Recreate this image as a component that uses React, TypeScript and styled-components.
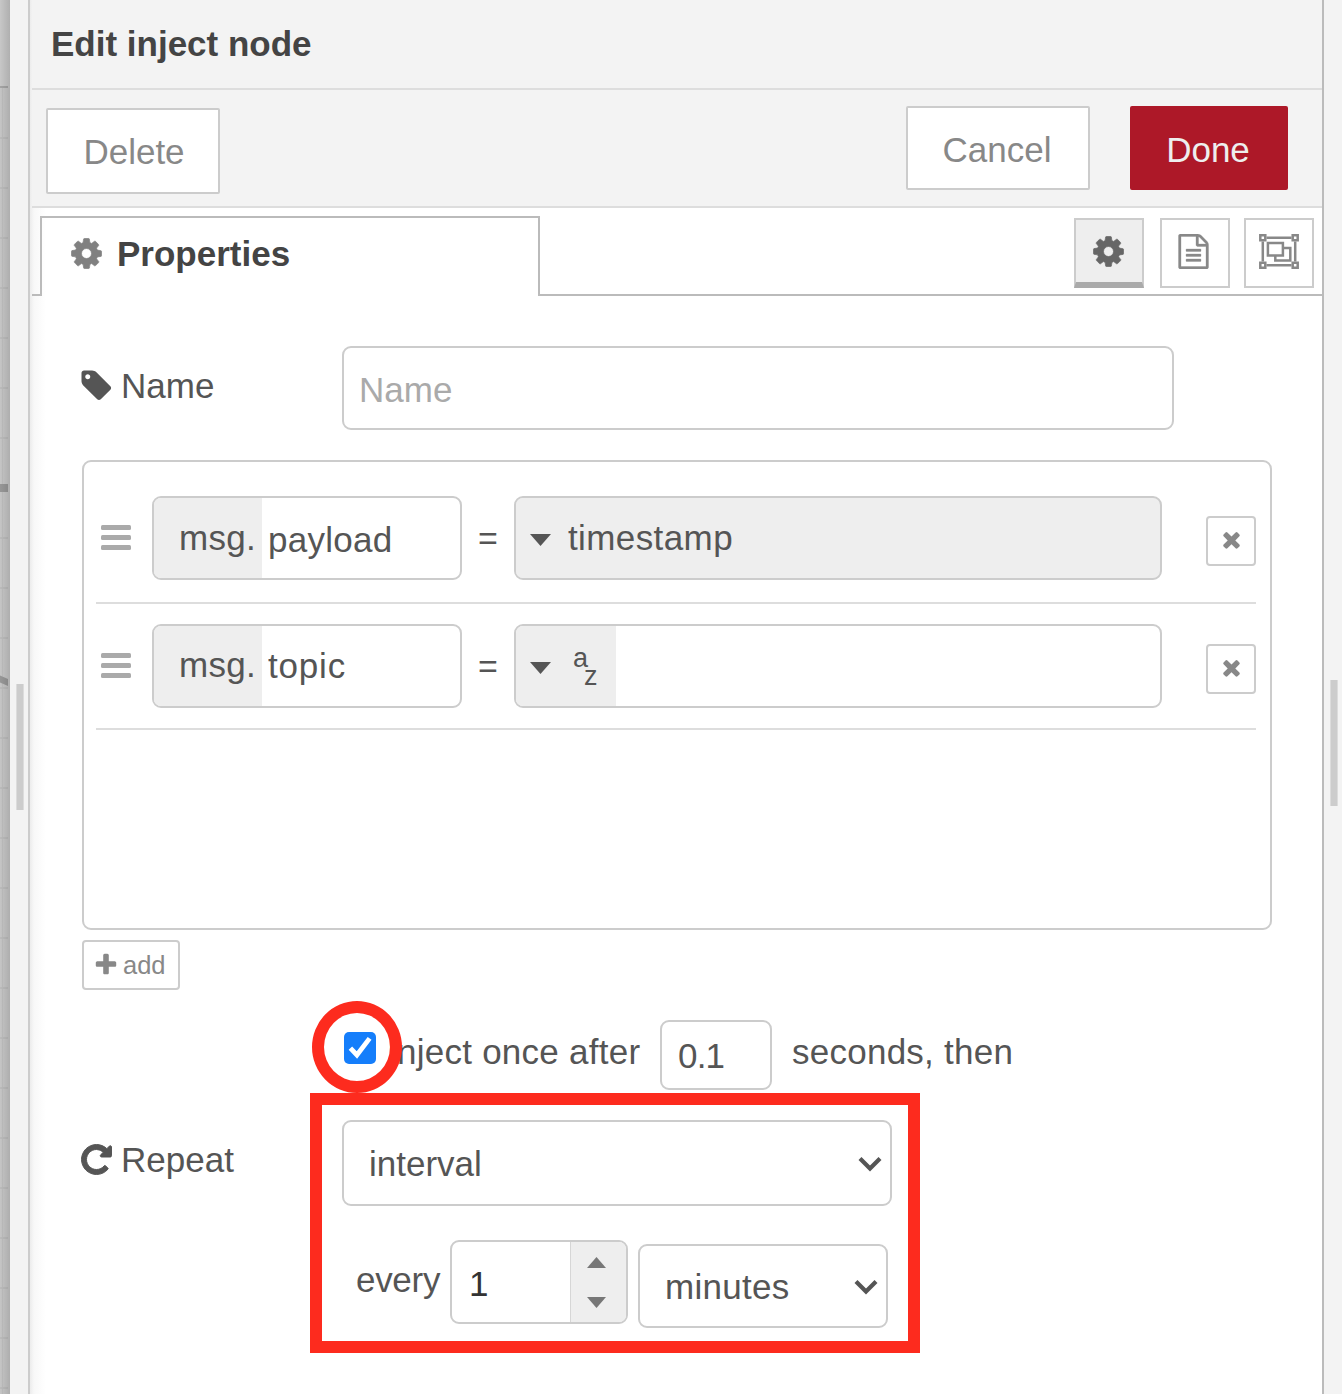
import React from "react";
import styled, { createGlobalStyle } from "styled-components";

const Global = createGlobalStyle`
  * { box-sizing: border-box; }
  body { margin: 0; background: #fff; }
  input, button { font: inherit; color: inherit; margin: 0; outline: none; }
`;

/* ---------- shell ---------- */
const Shell = styled.div`
  position: relative;
  display: flex;
  width: 1342px;
  height: 1394px;
  overflow: hidden;
  background: #fff;
  color: #555;
  font-family: "Liberation Sans", Arial, sans-serif;
  font-size: 35px;
  line-height: 40px;
`;

const Canvas = styled.svg`
  flex: none;
  display: block;
`;

const Separator = styled.div<{ $width: number; $top: number; $left: number }>`
  flex: none;
  width: ${(p) => p.$width}px;
  padding: ${(p) => p.$top}px 0 0 ${(p) => p.$left}px;
  background: #f3f3f3;
`;

const Grip = styled.div`
  width: 8px;
  height: 126px;
  background: #ccc;
  border: solid #dcdcdc;
  border-width: 0 1px;
`;

const Tray = styled.section`
  flex: none;
  width: 1296px;
  padding-left: 2px;
  border-left: 2px solid #ccc;
  border-right: 2px solid #bbb;
  background: linear-gradient(to right, #ececec, #f8f8f8 4px, #fff 16px);
`;

const Header = styled.header`
  height: 90px;
  padding: 24px 0 0 19px;
  border-bottom: 2px solid #ddd;
  background: #f3f3f3;
  color: #444;
  font-weight: bold;
`;

const Toolbar = styled.div`
  display: flex;
  align-items: flex-start;
  height: 118px;
  padding: 16px 34px 0 14px;
  border-bottom: 2px solid #ddd;
  background: #f3f3f3;
`;

const ToolButton = styled.button<{ $width: number; $height?: number; $primary?: boolean }>`
  width: ${(p) => p.$width}px;
  height: ${(p) => p.$height ?? 84}px;
  padding: ${(p) => (p.$height ? "2px 0 0 2px" : "4px 2px 0 0")};
  border: 2px solid ${(p) => (p.$primary ? "#ad1828" : "#ccc")};
  border-radius: 2px;
  background: ${(p) => (p.$primary ? "#ad1828" : "#fff")};
  color: ${(p) => (p.$primary ? "#eee" : "#888")};
`;

const LeftTools = styled.div`
  flex: 1;
  padding-top: 2px;
`;

const RightTools = styled.div`
  display: flex;
  gap: 40px;
`;

/* ---------- tabs ---------- */
const TabStrip = styled.div`
  display: flex;
  height: 88px;
  padding-top: 8px;
`;

const TabEdge = styled.div`
  width: 8px;
  border-bottom: 2px solid #bbb;
`;

const Tab = styled.div`
  display: flex;
  width: 500px;
  padding: 16px 0 0 30px;
  gap: 13px;
  border: 2px solid #bbb;
  border-bottom: 0;
  color: #444;
  font-weight: bold;
`;

const TabIcon = styled.span`
  display: flex;
  padding-top: 2px;
  margin-left: -3px;
  color: #808080;
`;

const TabActions = styled.div`
  flex: 1;
  display: flex;
  justify-content: flex-end;
  padding: 2px 8px 0 0;
  border-bottom: 2px solid #bbb;
`;

const TabAction = styled.button<{ $active?: boolean; $gap?: number }>`
  display: flex;
  align-items: center;
  justify-content: center;
  width: 70px;
  height: 70px;
  margin-left: ${(p) => p.$gap ?? 0}px;
  padding: ${(p) => (p.$active ? "0 1px 0 0" : "0 0 3px")};
  border: 2px solid #ccc;
  ${(p) => p.$active && "border-bottom: 6px solid #aaa;"}
  background: ${(p) => (p.$active ? "#eee" : "#fff")};
  color: ${(p) => (p.$active ? "#666" : "#888")};
`;

/* ---------- form ---------- */
const Form = styled.div`
  padding: 50px 50px 0;
`;

const FormRow = styled.div<{ $after?: number }>`
  display: flex;
  align-items: flex-start;
  margin-bottom: ${(p) => p.$after ?? 0}px;
`;

const Label = styled.label`
  display: flex;
  gap: 7px;
  width: 260px;
  padding-top: 20px;
`;

const LabelIcon = styled.span`
  display: flex;
  margin: 2px 0 0 -3px;
`;

const Field = styled.div<{ $width: number; $height?: number; $filled?: boolean }>`
  display: flex;
  flex: none;
  width: ${(p) => p.$width}px;
  height: ${(p) => p.$height ?? 84}px;
  border: 2px solid #ccc;
  border-radius: 9px;
  overflow: hidden;
  background: ${(p) => (p.$filled ? "#eee" : "#fff")};
`;

const TextInput = styled.input<{ $left: number; $top?: number; $spacing?: number; $dark?: boolean }>`
  flex: 1;
  min-width: 0;
  padding: ${(p) => p.$top ?? 4}px 0 0 ${(p) => p.$left}px;
  border: 0;
  background: transparent;
  color: ${(p) => (p.$dark ? "#333" : "#555")};
  letter-spacing: ${(p) => p.$spacing ?? 0}px;
  &::placeholder { color: #aaa; opacity: 1; }
`;

const List = styled.div`
  width: 1190px;
  height: 470px;
  padding: 12px 14px 0 12px;
  border: 2px solid #ccc;
  border-radius: 9px;
`;

const Item = styled.div<{ $top: number; $height: number }>`
  display: flex;
  align-items: flex-start;
  height: ${(p) => p.$height}px;
  padding: ${(p) => p.$top}px 0 0 5px;
  border-bottom: 2px solid #ddd;
`;

const DragHandle = styled.div`
  display: flex;
  flex-direction: column;
  gap: 5px;
  width: 30px;
  margin: 29px 21px 0 0;
`;

const Bar = styled.i`
  height: 5px;
  border-radius: 1.5px;
  background: #aaa;
`;

const Prefix = styled.span<{ $top?: number }>`
  width: 108px;
  padding: ${(p) => p.$top ?? 20}px 0 0 25px;
  background: #eee;
  letter-spacing: 0.3px;
`;

const Equals = styled.span`
  width: 52px;
  padding-top: 22px;
  text-align: center;
  font-size: 34px;
`;

const TypePicker = styled.span<{ $width: number }>`
  display: flex;
  width: ${(p) => p.$width}px;
  padding: 20px 0 0 14px;
  background: #eee;
  letter-spacing: 0.4px;
`;

const Caret = styled.i`
  flex: none;
  width: 21px;
  height: 12px;
  margin: 16px 17px 0 0;
  background: #555;
  clip-path: polygon(0 0, 100% 0, 50% 100%);
`;

const StringType = styled.span`
  display: flex;
  margin-top: -4px;
  padding-left: 5px;
  font-size: 27px;
  line-height: 32px;
  letter-spacing: 0;
`;

const Zed = styled.span`
  padding-top: 18px;
  margin-left: -4px;
`;

const RemoveButton = styled.button`
  display: flex;
  align-items: center;
  justify-content: center;
  width: 50px;
  height: 50px;
  margin: 20px 0 0 44px;
  padding: 0 0 4px;
  border: 2px solid #ccc;
  border-radius: 4px;
  background: #fff;
  color: #888;
`;

const AddButton = styled.button`
  display: flex;
  align-items: center;
  gap: 4px;
  width: 98px;
  height: 50px;
  margin-top: 10px;
  padding: 0 0 1px 9px;
  border: 2px solid #ccc;
  border-radius: 4px;
  background: #fff;
  color: #888;
  font-size: 25.5px;
`;

const AddIcon = styled.span`
  display: flex;
`;

const OnceRow = styled.div`
  display: flex;
  margin-top: 30px;
  padding-left: 262px;
`;

const CheckBox = styled.span`
  display: flex;
  flex: none;
  width: 32px;
  height: 32px;
  margin-top: 12px;
  border-radius: 5px;
  background: #157efb;
`;

const Text = styled.span<{ $top: number; $left?: number; $width?: number; $spacing?: number }>`
  flex: none;
  width: ${(p) => (p.$width ? `${p.$width}px` : "auto")};
  padding: ${(p) => p.$top}px 0 0 ${(p) => p.$left ?? 0}px;
  letter-spacing: ${(p) => p.$spacing ?? 0}px;
  white-space: pre;
`;

const RepeatRow = styled.div`
  display: flex;
  align-items: flex-start;
  margin-top: 30px;
`;

const Select = styled.button<{ $width: number; $height: number; $top: number; $spacing?: number }>`
  display: flex;
  align-items: center;
  justify-content: space-between;
  width: ${(p) => p.$width}px;
  height: ${(p) => p.$height}px;
  padding: ${(p) => p.$top}px 8px 0 25px;
  border: 2px solid #ccc;
  border-radius: 9px;
  background: #fff;
  color: #555;
  letter-spacing: ${(p) => p.$spacing ?? 0}px;
`;

const EveryRow = styled.div`
  display: flex;
  align-items: flex-start;
  padding: 34px 0 0 274px;
`;

const Steppers = styled.span`
  display: flex;
  flex-direction: column;
  align-items: center;
  gap: 29px;
  width: 56px;
  padding: 15px 4px 0 0;
  border-left: 1px solid #d6d6d6;
  background: #eee;
`;

const Step = styled.i<{ $down?: boolean }>`
  width: 19px;
  height: 11px;
  background: #777;
  clip-path: ${(p) => (p.$down ? "polygon(0 0, 100% 0, 50% 100%)" : "polygon(0 100%, 100% 100%, 50% 0)")};
`;

const MinutesSlot = styled.div`
  padding: 4px 0 0 10px;
`;

/* ---------- annotations ---------- */
const RingMark = styled.div`
  position: absolute;
  left: 312px;
  top: 1001px;
  width: 90px;
  height: 92px;
  border: 12px solid #fd2b1e;
  border-radius: 50%;
`;

const BoxMark = styled.div`
  position: absolute;
  left: 310px;
  top: 1093px;
  width: 610px;
  height: 260px;
  border: 12px solid #fd2b1e;
`;

/* ---------- icons ---------- */
const paths = {
  cog: "M1152 896q0-106-75-181t-181-75-181 75-75 181 75 181 181 75 181-75 75-181zm512-109v222q0 12-8 23t-20 13l-185 28q-19 54-39 91 35 50 107 138 10 12 10 25t-9 23q-27 37-99 108t-94 71q-12 0-26-9l-138-108q-44 23-91 38-16 136-29 186-7 28-36 28h-222q-14 0-24.5-8.5t-11.5-21.5l-28-184q-49-16-90-37l-141 107q-10 9-25 9-14 0-25-11-126-114-165-168-7-10-7-23 0-12 8-23 15-21 51-66.5t54-70.5q-27-50-41-99l-183-27q-13-2-21-12.5t-8-23.5v-222q0-12 8-23t19-13l186-28q14-46 39-92-40-57-107-138-10-12-10-24 0-10 9-23 26-36 98.5-107.5t94.5-71.5q13 0 26 10l138 107q44-23 91-38 16-136 29-186 7-28 36-28h222q14 0 24.5 8.5t11.5 21.5l28 184q49 16 90 37l142-107q9-9 24-9 13 0 25 10 129 119 165 170 7 8 7 22 0 12-8 23-15 21-51 66.5t-54 70.5q26 50 41 98l183 28q13 2 21 12.5t8 23.5z",
  tag: "M576 448q0-53-37.5-90.5t-90.5-37.5-90.5 37.5-37.5 90.5 37.5 90.5 90.5 37.5 90.5-37.5 37.5-90.5zm1067 576q0 53-37 90l-491 492q-39 37-91 37-53 0-90-37l-715-716q-38-37-64.5-101t-26.5-117v-416q0-52 38-90t90-38h416q53 0 117 26.5t102 64.5l715 714q37 39 37 91z",
  repeat: "M1664 256v448q0 26-19 45t-45 19h-448q-42 0-59-40-17-39 14-69l138-138q-148-137-349-137-104 0-198.5 40.5t-163.5 109.5-109.5 163.5-40.5 198.5 40.5 198.5 109.5 163.5 163.5 109.5 198.5 40.5q119 0 225-52t179-147q7-10 23-12 15 0 25 9l137 138q9 8 9.5 20.5t-7.5 22.5q-109 132-264 204.5t-327 72.5q-156 0-298-61t-245-164-164-245-61-298 61-298 164-245 245-164 298-61q147 0 284.5 55.5t244.5 156.5l130-129q29-31 70-14 39 17 39 59z",
  times: "M1490 1322q0 40-28 68l-136 136q-28 28-68 28t-68-28l-294-294-294 294q-28 28-68 28t-68-28l-136-136q-28-28-28-68t28-68l294-294-294-294q-28-28-28-68t28-68l136-136q28-28 68-28t68 28l294 294 294-294q28-28 68-28t68 28l136 136q28 28 28 68t-28 68l-294 294 294 294q28 28 28 68z",
  plus: "M1600 736v192q0 40-28 68t-68 28h-416v416q0 40-28 68t-68 28h-192q-40 0-68-28t-28-68v-416h-416q-40 0-68-28t-28-68v-192q0-40 28-68t68-28h416v-416q0-40 28-68t68-28h192q40 0 68 28t28 68v416h416q40 0 68 28t28 68z",
  file: "M1596 380q28 28 48 76t20 88v1152q0 40-28 68t-68 28h-1344q-40 0-68-28t-28-68v-1600q0-40 28-68t68-28h896q40 0 88 20t76 48zm-444-244v376h376q-10-29-22-41l-313-313q-12-12-41-22zm384 1528v-1024h-416q-40 0-68-28t-28-68v-416h-768v1536h1280zm-1024-864q0-14 9-23t23-9h704q14 0 23 9t9 23v64q0 14-9 23t-23 9h-704q-14 0-23-9t-9-23v-64zm736 224q14 0 23 9t9 23v64q0 14-9 23t-23 9h-704q-14 0-23-9t-9-23v-64q0-14 9-23t23-9h704zm0 256q14 0 23 9t9 23v64q0 14-9 23t-23 9h-704q-14 0-23-9t-9-23v-64q0-14 9-23t23-9h704z",
};

const Icon = ({ name, size = 35, weight = 0 }: { name: keyof typeof paths; size?: number; weight?: number }) => (
  <svg
    width={size}
    height={size}
    viewBox="0 0 1792 1792"
    fill="currentColor"
    stroke="currentColor"
    strokeWidth={weight}
  >
    <path d={paths[name]} />
  </svg>
);

const FileIcon = () => (
  <svg width="36" height="35" viewBox="51 0 1843 1792" fill="currentColor" stroke="currentColor" strokeWidth="16">
    <path d={paths.file} />
  </svg>
);

const ObjectGroup = () => (
  <svg width="40" height="35" viewBox="0 0 40 35" fill="none" stroke="currentColor" strokeWidth="2.5">
    <path d="M7.5 3.8h25M7.500 31.200h25M3.800 7.500v20M36.200 7.500v20" />
    <path d="M1.300 1.300h5v5h-5zM33.700 1.300h5v5h-5zM1.300 28.700h5v5h-5zM33.700 28.700h5v5h-5z" />
    <path d="M8.900 8.900h15v12.600h-15zM23.900 13.900h7.400v12.600h-15v-5" />
  </svg>
);

const Chevron = () => (
  <svg width="24" height="16" viewBox="0 0 24 16" fill="none" stroke="#555" strokeWidth="4.2">
    <path d="M2 2.5 12 12.5 22 2.5" />
  </svg>
);

const Tick = () => (
  <svg width="32" height="32" viewBox="0 0 32 32" fill="none" stroke="#fff" strokeWidth="4.8">
    <path d="M6.400 16.200 12.900 23 25.600 6.400" />
  </svg>
);

const gridLines = Array.from({ length: 26 }, (_, i) => 137 + i * 50);

const Workspace = () => (
  <Canvas width="10" height="1394" viewBox="0 0 10 1394">
    <defs>
      <linearGradient id="shade" x1="0" x2="1" y1="0" y2="0">
        <stop offset="0" stopColor="#000" stopOpacity="0" />
        <stop offset="1" stopColor="#000" stopOpacity="0.12" />
      </linearGradient>
    </defs>
    <rect width="10" height="1394" fill="#c7c7c7" />
    <rect y="88" width="10" height="1306" fill="#c5c5c5" />
    <rect y="88" x="2" width="1" height="1306" fill="#bdbdbd" />
    <rect y="86" width="8" height="2" fill="#a4a4a4" />
    {gridLines.map((y) => (
      <rect key={y} y={y} width="8" height="2" fill="#bbb" />
    ))}
    <rect y="484" width="8" height="8" fill="#979797" />
    <path d="M0 675.500 8 679V686L0 682.500z" fill="#979797" />
    <rect width="10" height="1394" fill="url(#shade)" />
  </Canvas>
);

const Handle = () => (
  <DragHandle>
    <Bar />
    <Bar />
    <Bar />
  </DragHandle>
);

export default function App() {
  return (
    <>
      <Global />
      <Shell>
        <Workspace />
        <Separator $width={18} $top={684} $left={6}>
          <Grip />
        </Separator>
        <Tray>
          <Header>Edit inject node</Header>
          <Toolbar>
            <LeftTools>
              <ToolButton $width={174} $height={86}>Delete</ToolButton>
            </LeftTools>
            <RightTools>
              <ToolButton $width={184}>Cancel</ToolButton>
              <ToolButton $width={158} $primary>Done</ToolButton>
            </RightTools>
          </Toolbar>
          <TabStrip>
            <TabEdge />
            <Tab>
              <TabIcon><Icon name="cog" weight={36} /></TabIcon>
              <span>Properties</span>
            </Tab>
            <TabActions>
              <TabAction $active><Icon name="cog" weight={36} /></TabAction>
              <TabAction $gap={16}><FileIcon /></TabAction>
              <TabAction $gap={14}><ObjectGroup /></TabAction>
            </TabActions>
          </TabStrip>

          <Form>
            <FormRow $after={30}>
              <Label>
                <LabelIcon><Icon name="tag" /></LabelIcon>
                Name
              </Label>
              <Field $width={832}>
                <TextInput $left={15} placeholder="Name" />
              </Field>
            </FormRow>

            <List>
              <Item $top={22} $height={130}>
                <Handle />
                <Field $width={310}>
                  <Prefix>msg.</Prefix>
                  <TextInput $left={6} $spacing={0.25} defaultValue="payload" />
                </Field>
                <Equals>=</Equals>
                <Field $width={648} $filled>
                  <TypePicker $width={600}>
                    <Caret />
                    timestamp
                  </TypePicker>
                </Field>
                <RemoveButton><Icon name="times" size={25} /></RemoveButton>
              </Item>
              <Item $top={20} $height={126}>
                <Handle />
                <Field $width={310}>
                  <Prefix $top={19}>msg.</Prefix>
                  <TextInput $left={6} $top={0} $spacing={0.8} defaultValue="topic" />
                </Field>
                <Equals>=</Equals>
                <Field $width={648}>
                  <TypePicker $width={100}>
                    <Caret />
                    <StringType>a<Zed>z</Zed></StringType>
                  </TypePicker>
                </Field>
                <RemoveButton><Icon name="times" size={25} /></RemoveButton>
              </Item>
            </List>
            <AddButton>
              <AddIcon><Icon name="plus" size={26} /></AddIcon>
              add
            </AddButton>

            <OnceRow>
              <CheckBox><Tick /></CheckBox>
              <Text $top={12} $left={11} $width={284} $spacing={0.25}>Inject once after</Text>
              <Field $width={112} $height={70}>
                <TextInput $left={16} $top={2} $spacing={-0.8} defaultValue="0.1" />
              </Field>
              <Text $top={12} $left={20} $spacing={0.25}>seconds, then</Text>
            </OnceRow>

            <RepeatRow>
              <Label>
                <LabelIcon><Icon name="repeat" weight={50} /></LabelIcon>
                Repeat
              </Label>
              <Select $width={550} $height={86} $top={2}>interval<Chevron /></Select>
            </RepeatRow>

            <EveryRow>
              <Text $top={20} $width={94} $spacing={-0.3}>every</Text>
              <Field $width={178}>
                <TextInput $left={17} $dark defaultValue="1" />
                <Steppers>
                  <Step />
                  <Step $down />
                </Steppers>
              </Field>
              <MinutesSlot>
                <Select $width={250} $height={84} $top={1} $spacing={0.3}>minutes<Chevron /></Select>
              </MinutesSlot>
            </EveryRow>
          </Form>
        </Tray>
        <Separator $width={18} $top={680} $left={6}>
          <Grip />
        </Separator>
        <RingMark />
        <BoxMark />
      </Shell>
    </>
  );
}
